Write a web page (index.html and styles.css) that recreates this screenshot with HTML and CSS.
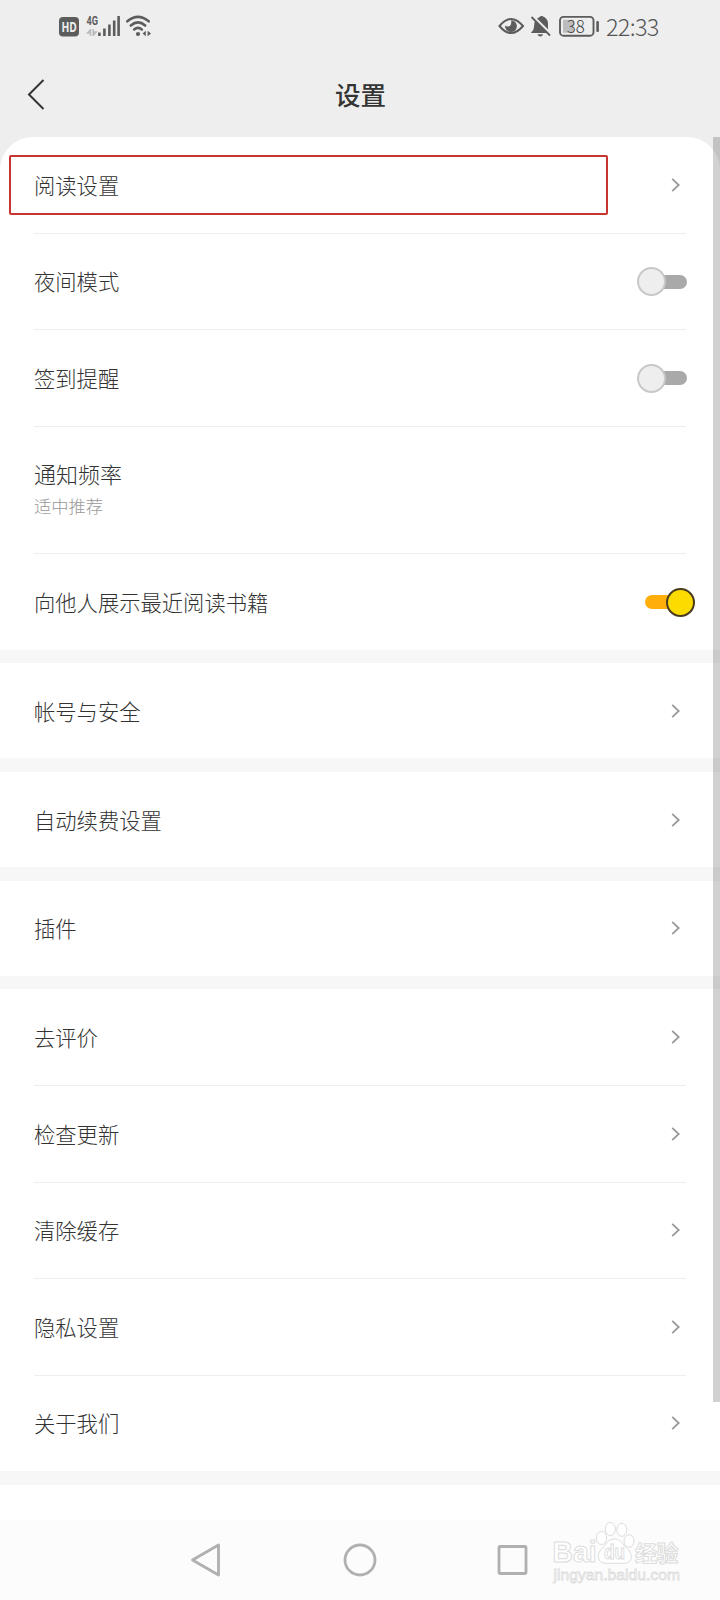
FILE: index.html
```html
<!DOCTYPE html>
<html lang="zh-CN">
<head>
  <meta charset="UTF-8" />
  <title>设置</title>
  <link rel="stylesheet" href="styles.css">
</head>
<body>
  <svg class="defs" width="0" height="0">
    <symbol id="arrow" viewBox="0 0 10 16">
      <path d="M1.2 1.8 L7.7 8 L1.2 14.2" fill="none" stroke="#999" stroke-width="1.8" />
    </symbol>
  </svg>

  <div class="status">
    <svg class="status-left" width="94" height="24" viewBox="58 14 94 24">
      <rect x="59" y="17" width="20" height="19.5" rx="4" fill="#5c5c5c" />
      <text class="hd" x="61.5" y="31.6" textLength="15.4" lengthAdjust="spacingAndGlyphs">HD</text>
      <text class="net" x="86.5" y="25" textLength="11.5" lengthAdjust="spacingAndGlyphs">4G</text>
      <path d="M90.5 29 v7 M90.5 29.5 l-3 3.5 h3 M93.2 36 v-7 M93.2 35.5 l3 -3.5 h-3" fill="none" stroke="#bbb" stroke-width="1.5" />
      <path d="M99.4 32.5 V36 M104.4 28.5 V36 M109.4 24.5 V36 M114.2 20.5 V36 M118.6 16 V36" fill="none" stroke="#5c5c5c" stroke-width="2.6" />
      <g fill="none" stroke="#5c5c5c" stroke-width="2.6" stroke-linecap="round">
        <path d="M127.3 21.3 Q138 12.5 148.7 21.3" />
        <path d="M130.8 25.5 Q138 19.3 145.2 25.5" />
        <path d="M134.2 29.4 Q138 26.3 141.8 29.4" />
      </g>
      <circle cx="138" cy="34" r="2.1" fill="#5c5c5c" />
      <path d="M145.8 30.8 v5.4 l-3.2 -2.8 zM147.6 36.2 v-5.4 l3.4 2.8 z" fill="#5c5c5c" />
    </svg>

    <div class="status-right">
      <svg width="26" height="24" viewBox="498 14 26 24">
        <path d="M499.5 26 Q511 11.8 523 26 Q511 40.2 499.5 26 z" fill="none" stroke="#5c5c5c" stroke-width="2" />
        <path d="M511 20.2 a5.9 5.9 0 1 1 -5.9 5.4 q2 1.6 4.2 .6 q2.8 -1.7 1.7 -6 z" fill="#5c5c5c" />
      </svg>
      <svg width="22" height="24" viewBox="531 14 22 24">
        <path d="M536.2 20.5 L548.5 33 H531.8 Q535 30.5 535 27 Q534.9 23 536.2 20.5 z" fill="#5c5c5c" />
        <path d="M538 18.6 Q539.5 17.3 540.5 17.2 Q541.2 15.5 543 16 Q549 18 549 23.5 Q548.9 27 549.2 29.5 z" fill="#5c5c5c" />
        <path d="M538.5 34.2 h5.6 q-.7 2.3 -2.8 2.3 t-2.8 -2.3 z" fill="#5c5c5c" />
        <path d="M532.5 17 L551 35.5" stroke="#5c5c5c" stroke-width="1.8" />
      </svg>
      <svg width="42" height="24" viewBox="558 14 42 24">
        <rect x="560" y="16.9" width="33.5" height="18.8" rx="3.5" fill="none" stroke="#5c5c5c" stroke-width="1.9" />
        <rect x="563" y="19.8" width="10.5" height="13" fill="#bdbdbd" />
        <rect x="596.3" y="21" width="2.6" height="11" rx="1" fill="#5c5c5c" />
        <text class="level" x="566.8" y="32.6" textLength="18" lengthAdjust="spacingAndGlyphs">38</text>
      </svg>
      <span class="time">22:33</span>
    </div>
  </div>

  <div class="header">
    <svg class="back" width="20" height="34" viewBox="0 0 20 34">
      <path d="M17.5 3 L3 17.5 L17.5 32" fill="none" stroke="#333" stroke-width="2" />
    </svg>
    <h1>设置</h1>
  </div>

  <div class="list">
    <div class="group first">
      <div class="row">
        <span>阅读设置</span>
        <svg class="arrow"><use href="#arrow" /></svg>
        <div class="highlight"></div>
      </div>
      <div class="row"><span>夜间模式</span><div class="switch"></div></div>
      <div class="row"><span>签到提醒</span><div class="switch"></div></div>
      <div class="row tall">
        <div>
          <div class="name">通知频率</div>
          <div class="sub">适中推荐</div>
        </div>
      </div>
      <div class="row"><span>向他人展示最近阅读书籍</span><div class="switch on"></div></div>
    </div>

    <div class="group">
      <div class="row"><span>帐号与安全</span><svg class="arrow"><use href="#arrow" /></svg></div>
    </div>

    <div class="group">
      <div class="row"><span>自动续费设置</span><svg class="arrow"><use href="#arrow" /></svg></div>
    </div>

    <div class="group">
      <div class="row"><span>插件</span><svg class="arrow"><use href="#arrow" /></svg></div>
    </div>

    <div class="group">
      <div class="row"><span>去评价</span><svg class="arrow"><use href="#arrow" /></svg></div>
      <div class="row"><span>检查更新</span><svg class="arrow"><use href="#arrow" /></svg></div>
      <div class="row"><span>清除缓存</span><svg class="arrow"><use href="#arrow" /></svg></div>
      <div class="row"><span>隐私设置</span><svg class="arrow"><use href="#arrow" /></svg></div>
      <div class="row"><span>关于我们</span><svg class="arrow"><use href="#arrow" /></svg></div>
    </div>

    <div class="group rest"></div>
    <div class="scrollbar"></div>
  </div>

  <div class="navbar">
    <svg width="34" height="36" viewBox="0 0 34 36">
      <path d="M29.5 3 V33 L3.5 18 z" fill="none" stroke="#b0b0b0" stroke-width="2.8" stroke-linejoin="round" />
    </svg>
    <svg width="36" height="36" viewBox="0 0 36 36">
      <circle cx="19" cy="18" r="15" fill="none" stroke="#b0b0b0" stroke-width="2.8" />
    </svg>
    <svg width="34" height="36" viewBox="0 0 34 36">
      <rect x="4" y="4.500" width="27" height="27" rx="1" fill="none" stroke="#b0b0b0" stroke-width="2.8" />
    </svg>
  </div>

  <svg class="watermark" width="134" height="68" viewBox="550 1520 134 68">
    <g fill="#fff" stroke="#dcdcdc" stroke-width="1">
      <text class="logo" x="552.5" y="1562" textLength="44" lengthAdjust="spacingAndGlyphs">Bai</text>
      <ellipse cx="601.5" cy="1538" rx="5.2" ry="6.5" />
      <ellipse cx="610.3" cy="1529" rx="5" ry="6.5" />
      <ellipse cx="621.8" cy="1529.8" rx="5" ry="6.5" />
      <ellipse cx="629" cy="1541" rx="5" ry="6.3" />
      <path d="M614.5 1539 C621 1539 622 1544 627 1548.5 C634 1555 632 1563 624 1563.3 H606 C597 1563 596 1554.5 602 1548.5 C607 1544 607.5 1539 614.5 1539 z" />
      <text class="du" x="604" y="1559" textLength="21" lengthAdjust="spacingAndGlyphs">du</text>
      <text class="cn" x="635" y="1560.5" textLength="43.5">经验</text>
      <text class="url" x="553.5" y="1579.5" textLength="126.5" lengthAdjust="spacingAndGlyphs">jingyan.baidu.com</text>
    </g>
  </svg>
</body>
</html>
```
FILE: styles.css
```css
* {
  box-sizing: border-box;
}

body {
  margin: 0;
  width: 720px;
  height: 1600px;
  overflow: hidden;
  position: relative;
  display: flex;
  flex-direction: column;
  background: #eee;
  color: #333;
  font-family: "Noto Sans CJK SC", sans-serif;
}

svg {
  display: block;
  flex: none;
  overflow: visible;
}

.defs {
  position: absolute;
}

/* status bar */
.status {
  height: 52px;
  padding: 0 59px 0 58px;
  display: flex;
  align-items: center;
  justify-content: space-between;
}

.status-right {
  display: flex;
  align-items: center;
}

.status-right svg {
  margin-right: 6px;
}

.hd {
  font: bold 14px "Open Sans", sans-serif;
  fill: #eee;
}

.net {
  font: bold 12px Roboto, sans-serif;
  fill: #5c5c5c;
}

.level {
  font: 300 17px "Noto Sans CJK SC", sans-serif;
  fill: #444;
}

.time {
  width: 55px;
  padding-bottom: 1px;
  font: 300 23.5px/26px "Noto Sans CJK SC", sans-serif;
  letter-spacing: -0.7px;
  white-space: nowrap;
  color: #555;
}

/* title */
.header {
  height: 85px;
  display: flex;
  align-items: center;
  position: relative;
  padding: 0 26px 2px;
}

.header h1 {
  flex: 1;
  margin: 0;
  padding-right: 19px;
  text-align: center;
  font-size: 25.5px;
  font-weight: 500;
}

/* settings */
.list {
  position: relative;
  flex: 1;
  display: flex;
  flex-direction: column;
  gap: 13.3px;
  background: #f7f7f7;
  border-radius: 33px 33px 0 0;
}

.group {
  background: #fff;
  padding: 0 34px;
}

.first {
  border-radius: 33px 33px 0 0;
}

.row {
  position: relative;
  height: 96.6px;
  display: flex;
  align-items: center;
  justify-content: space-between;
  border-bottom: 1px solid #eee;
  font-size: 21.3px;
  line-height: 30px;
  font-weight: 300;
}

.row:last-child {
  height: 95.5px;
  border-bottom: none;
}

.tall {
  height: 127.4px;
}

.name {
  font-size: 22px;
  line-height: 32px;
}

.sub {
  padding-top: 1px;
  font-size: 17.3px;
  line-height: 32px;
  color: #999;
}

.arrow {
  width: 10px;
  height: 16px;
  margin-right: 5px;
}

.switch {
  display: flex;
  align-items: center;
  width: 50px;
  padding-top: 1px;
  margin-right: -1px;
}

.switch::before {
  content: "";
  box-sizing: border-box;
  flex: none;
  width: 29px;
  height: 29px;
  border: 2px solid #c8c8c8;
  border-radius: 50%;
  background: #eee;
  z-index: 1;
}

.switch::after {
  content: "";
  flex: 1;
  height: 14px;
  margin-left: -8px;
  border-radius: 7px;
  background: #a9a9a9;
}

.switch.on {
  flex-direction: row-reverse;
  margin-right: -9px;
}

.switch.on::before {
  border-color: #4a3c1c;
  background: #fbdb00;
}

.switch.on::after {
  margin: 0 -8px 0 0;
  background: #ffae0a;
}

.highlight {
  position: absolute;
  left: -25px;
  top: 18px;
  width: 599px;
  height: 60px;
  border: 2px solid #c8352e;
  border-radius: 2px;
}

.rest {
  flex: 1;
}

.scrollbar {
  position: absolute;
  top: 0;
  right: 0;
  width: 7px;
  height: 1265px;
  background: rgba(0, 0, 0, 0.18);
}

/* system buttons */
.navbar {
  height: 80px;
  padding: 0 191px 0 189px;
  display: flex;
  align-items: center;
  justify-content: space-between;
  background: #fcfcfc;
}

.watermark {
  position: absolute;
  left: 550px;
  top: 1520px;
}

.logo {
  font: bold 29px "Liberation Sans", sans-serif;
}

.du {
  font: bold 20px "Liberation Sans", sans-serif;
}

.cn {
  font: bold 22px "Noto Sans CJK SC", sans-serif;
}

.url {
  font: 15.5px "Liberation Sans", sans-serif;
  stroke-width: 0.8px;
}
```
